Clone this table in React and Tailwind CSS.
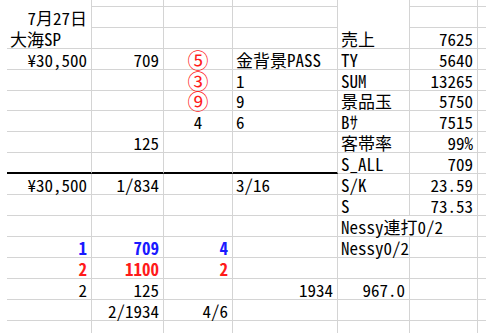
const COLS = ['w-[7px]', 'w-[85px]', 'w-[72px]', 'w-[69px]', 'w-[105px]', 'w-[72px]', 'w-[68px]', 'flex-1'];

const RED = 'text-[#ff1a1a]';
const BLUE = 'text-[#1a1aff]';
const CIRCLE = 'text-[#ff1a1a] text-[21px]';

// each row: height, cells by column index, columns without bottom / right lines
const rows = [
  { h: 'h-[7px]', cells: {}, noBottom: [1, 5] },
  { h: 'h-[21px]', cells: { 1: { t: '7月27日', a: 'r' } }, noBottom: [1, 5] },
  { h: 'h-[21px]', cells: { 1: { t: '大海SP', a: 'l' }, 5: { t: '売上' }, 6: { t: '7625', a: 'r' } } },
  {
    h: 'h-[21px]',
    cells: {
      1: { t: '¥30,500', a: 'r' },
      2: { t: '709', a: 'r' },
      3: { t: '⑤', a: 'c', c: CIRCLE },
      4: { t: '金背景PASS' },
      5: { t: 'TY' },
      6: { t: '5640', a: 'r' },
    },
  },
  { h: 'h-[21px]', cells: { 3: { t: '③', a: 'c', c: CIRCLE }, 4: { t: '1' }, 5: { t: 'SUM' }, 6: { t: '13265', a: 'r' } } },
  { h: 'h-[20px]', cells: { 3: { t: '⑨', a: 'c', c: CIRCLE }, 4: { t: '9' }, 5: { t: '景品玉' }, 6: { t: '5750', a: 'r' } } },
  { h: 'h-[21px]', cells: { 3: { t: '4', a: 'c' }, 4: { t: '6' }, 5: { t: 'Bｻ' }, 6: { t: '7515', a: 'r' } } },
  { h: 'h-[21px]', cells: { 2: { t: '125', a: 'r' }, 5: { t: '客帯率' }, 6: { t: '99%', a: 'r' } } },
  { h: 'h-[21px]', cells: { 5: { t: 'S_ALL' }, 6: { t: '709', a: 'r' } }, thick: true },
  {
    h: 'h-[21px]',
    cells: {
      1: { t: '¥30,500', a: 'r' },
      2: { t: '1/834', a: 'r' },
      4: { t: '3/16' },
      5: { t: 'S/K' },
      6: { t: '23.59', a: 'r' },
    },
  },
  { h: 'h-[21px]', cells: { 5: { t: 'S' }, 6: { t: '73.53', a: 'r' } } },
  { h: 'h-[21px]', cells: { 5: { t: 'Nessy連打0/2' } }, noRight: [5] },
  {
    h: 'h-[21px]',
    cells: {
      1: { t: '1', a: 'r', c: BLUE, b: true },
      2: { t: '709', a: 'r', c: BLUE, b: true },
      3: { t: '4', a: 'r', c: BLUE, b: true },
      5: { t: 'Nessy0/2' },
    },
  },
  {
    h: 'h-[21px]',
    cells: {
      1: { t: '2', a: 'r', c: RED, b: true },
      2: { t: '1100', a: 'r', c: RED, b: true },
      3: { t: '2', a: 'r', c: RED, b: true },
    },
  },
  {
    h: 'h-[21px]',
    cells: {
      1: { t: '2', a: 'r' },
      2: { t: '125', a: 'r' },
      4: { t: '1934', a: 'r' },
      5: { t: '967.0', a: 'r' },
    },
  },
  { h: 'h-[21px]', cells: { 2: { t: '2/1934', a: 'r' }, 3: { t: '4/6', a: 'r' } } },
  { h: 'h-[21px]', cells: {} },
];

const Cell = ({ col, cell, row }) => {
  const lines = col > 0;
  const bottom = lines && !(row.noBottom || []).includes(col);
  const right = lines && col < 7 && !(row.noRight || []).includes(col);
  const thick = row.thick && col >= 1 && col <= 4;

  const align =
    cell?.a === 'r' ? 'justify-end pr-[4px]' : cell?.a === 'c' ? 'justify-center' : 'justify-start pl-[3px]';

  return (
    <div
      className={`${COLS[col]} shrink-0 flex items-center ${align} whitespace-nowrap border-[#d4d4d4] ${
        right ? 'border-r' : ''
      } ${bottom ? (thick ? 'border-b-2 border-b-black' : 'border-b') : ''}`}
    >
      {cell && (
        <span className={`${cell.c || 'text-black'} ${cell.b ? 'font-bold' : ''} leading-none relative z-10`}>
          {cell.t}
        </span>
      )}
    </div>
  );
};

export default function App() {
  return (
    <div className="w-[486px] h-[333px] overflow-hidden bg-white text-[17px] font-['Noto_Sans_Mono_CJK_JP','Noto_Sans_CJK_JP',monospace]">
      {rows.map((row, i) => (
        <div key={i} className={`flex ${row.h}`}>
          {COLS.map((_, col) => (
            <Cell key={col} col={col} cell={row.cells[col]} row={row} />
          ))}
        </div>
      ))}
    </div>
  );
}
